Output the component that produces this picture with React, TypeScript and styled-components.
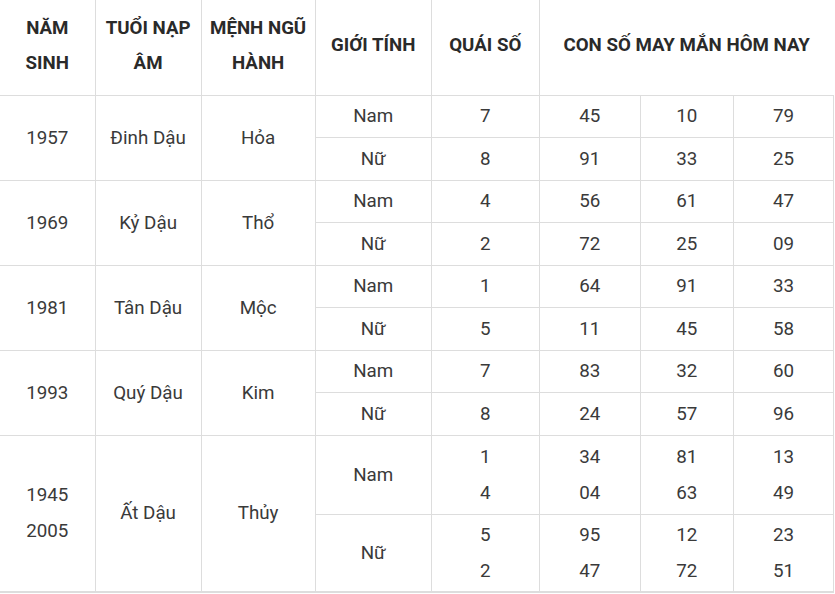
import React from "react";
import styled, { createGlobalStyle } from "styled-components";

const Global = createGlobalStyle`
  html, body { margin: 0; padding: 0; background: #fff; }
  body { font-family: Roboto, "Noto Sans", "Liberation Sans", sans-serif; }
`;

const Table = styled.table`
  border-collapse: collapse;
  table-layout: fixed;
  width: 834px;
  color: #3a3a3a;
  font-size: 18.8px;
`;

const Th = styled.th`
  font-weight: 700;
  color: #2a2a2a;
  font-size: 18.7px;
  line-height: 35px;
  text-align: center;
  vertical-align: middle;
  padding: 0 2px 3px;
  border-left: 1px solid #ddd;
  border-bottom: 1px solid #ddd;
  &:first-child { border-left: none; }
`;

const Td = styled.td<{ $first?: boolean; $thick?: boolean }>`
  text-align: center;
  vertical-align: middle;
  padding: 0;
  line-height: 36px;
  border-left: ${(p) => (p.$first ? "none" : "1px solid #ddd")};
  border-bottom: ${(p) => (p.$thick ? "2px solid #ddd" : "1px solid #ddd")};
  border-right: 1px solid #ddd;
`;

const HeadRow = styled.tr`
  height: 95px;
`;

const Row = styled.tr<{ $h: number }>`
  height: ${(p) => p.$h}px;
`;

const widths = [95, 106, 114, 116, 108, 101, 93, 100];

type Sub = { g: string; q: string[]; n: string[][] };
type Group = { year: string[]; tuoi: string; menh: string; subs: Sub[]; h: number[] };

const data: Group[] = [
  {
    year: ["1957"], tuoi: "Đinh Dậu", menh: "Hỏa", h: [42, 43],
    subs: [
      { g: "Nam", q: ["7"], n: [["45"], ["10"], ["79"]] },
      { g: "Nữ", q: ["8"], n: [["91"], ["33"], ["25"]] },
    ],
  },
  {
    year: ["1969"], tuoi: "Kỷ Dậu", menh: "Thổ", h: [42, 43],
    subs: [
      { g: "Nam", q: ["4"], n: [["56"], ["61"], ["47"]] },
      { g: "Nữ", q: ["2"], n: [["72"], ["25"], ["09"]] },
    ],
  },
  {
    year: ["1981"], tuoi: "Tân Dậu", menh: "Mộc", h: [42, 43],
    subs: [
      { g: "Nam", q: ["1"], n: [["64"], ["91"], ["33"]] },
      { g: "Nữ", q: ["5"], n: [["11"], ["45"], ["58"]] },
    ],
  },
  {
    year: ["1993"], tuoi: "Quý Dậu", menh: "Kim", h: [42, 43],
    subs: [
      { g: "Nam", q: ["7"], n: [["83"], ["32"], ["60"]] },
      { g: "Nữ", q: ["8"], n: [["24"], ["57"], ["96"]] },
    ],
  },
  {
    year: ["1945", "2005"], tuoi: "Ất Dậu", menh: "Thủy", h: [79, 78],
    subs: [
      { g: "Nam", q: ["1", "4"], n: [["34", "04"], ["81", "63"], ["13", "49"]] },
      { g: "Nữ", q: ["5", "2"], n: [["95", "47"], ["12", "72"], ["23", "51"]] },
    ],
  },
];

const Lines = ({ items }: { items: string[] }) => (
  <>
    {items.map((t, i) => (
      <React.Fragment key={i}>
        {i > 0 && <br />}
        {t}
      </React.Fragment>
    ))}
  </>
);

export default function App() {
  return (
    <>
      <Global />
      <Table>
        <colgroup>
          {widths.map((w, i) => (
            <col key={i} style={{ width: w }} />
          ))}
        </colgroup>
        <thead>
          <HeadRow>
            <Th>NĂM<br />SINH</Th>
            <Th>TUỔI NẠP<br />ÂM</Th>
            <Th>MỆNH NGŨ<br />HÀNH</Th>
            <Th>GIỚI TÍNH</Th>
            <Th>QUÁI SỐ</Th>
            <Th colSpan={3}>CON SỐ MAY MẮN HÔM NAY</Th>
          </HeadRow>
        </thead>
        <tbody>
          {data.map((g, gi) => {
            const last = gi === data.length - 1;
            return g.subs.map((s, si) => (
              <Row key={`${gi}-${si}`} $h={g.h[si]}>
                {si === 0 && (
                  <>
                    <Td $first rowSpan={2} $thick={last}>
                      <Lines items={g.year} />
                    </Td>
                    <Td rowSpan={2} $thick={last}>{g.tuoi}</Td>
                    <Td rowSpan={2} $thick={last}>{g.menh}</Td>
                  </>
                )}
                <Td $thick={last && si === 1}>{s.g}</Td>
                <Td $thick={last && si === 1}>
                  <Lines items={s.q} />
                </Td>
                {s.n.map((n, ni) => (
                  <Td key={ni} $thick={last && si === 1}>
                    <Lines items={n} />
                  </Td>
                ))}
              </Row>
            ));
          })}
        </tbody>
      </Table>
    </>
  );
}
